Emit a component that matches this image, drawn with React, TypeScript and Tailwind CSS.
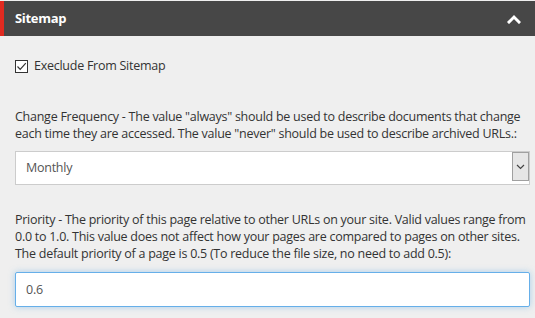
import React from 'react';

const App: React.FC = () => {
  return (
    <div className="w-[535px] h-[318px] bg-[#efefef] pt-px text-[#333333] text-[12.5px] font-['Open_Sans',sans-serif] overflow-hidden">
      <div className="flex h-[35px] items-center bg-[#474747] border-l-4 border-[#e02a20] pl-[11px] pr-[14px]">
        <span className="flex-1 text-white font-bold text-[13px] tracking-[-0.3px]">Sitemap</span>
        <svg width="14" height="10" viewBox="0 0 14 10" className="mt-px">
          <path d="M2 8 L7 3 L12 8" fill="none" stroke="#ffffff" strokeWidth="3" strokeLinecap="square" />
        </svg>
      </div>

      <div className="px-[15px] tracking-[-0.26px]">
        <label className="flex items-center gap-[6px] mt-[21px] leading-[18px]">
          <span className="flex items-center justify-center w-[13px] h-[13px] border border-[#333333] bg-white">
            <svg width="11" height="11" viewBox="0 0 11 11">
              <path d="M1.5 5.5 L4.2 8.3 L9.8 2.2" fill="none" stroke="#333333" strokeWidth="1.2" />
            </svg>
          </span>
          <span>Execlude From Sitemap</span>
        </label>

        <p className="mt-[33px] leading-[17px] whitespace-nowrap">
          Change Frequency - The value "always" should be used to describe documents that change
          <br />
          each time they are accessed. The value "never" should be used to describe archived URLs.:
        </p>

        <div className="mt-[9px] flex h-[34px] w-[515px] border border-[#cccccc] bg-white">
          <span className="flex-1 pl-[10px] leading-[32px] text-[#555555]">Monthly</span>
          <span className="flex items-center justify-center w-[17px] h-[29px] bg-[#e6e6e6] border border-[#a0a0a0]">
            <svg width="9" height="6" viewBox="0 0 9 6">
              <path d="M1 1 L4.5 4.5 L8 1" fill="none" stroke="#444444" strokeWidth="1.2" />
            </svg>
          </span>
        </div>

        <p className="mt-[26px] leading-[17px] whitespace-nowrap">
          Priority - The priority of this page relative to other URLs on your site. Valid values range from
          <br />
          0.0 to 1.0. This value does not affect how your pages are compared to pages on other sites.
          <br />
          The default priority of a page is 0.5 (To reduce the file size, no need to add 0.5):
        </p>

        <div className="mt-[10px] h-[35px] w-[515px] border border-[#66afe9] bg-white rounded-[2px] shadow-[0_0_6px_rgba(102,175,233,0.5)] pl-[10px] leading-[33px] text-[#555555]">
          0.6
        </div>
      </div>
    </div>
  );
};

export default App;
